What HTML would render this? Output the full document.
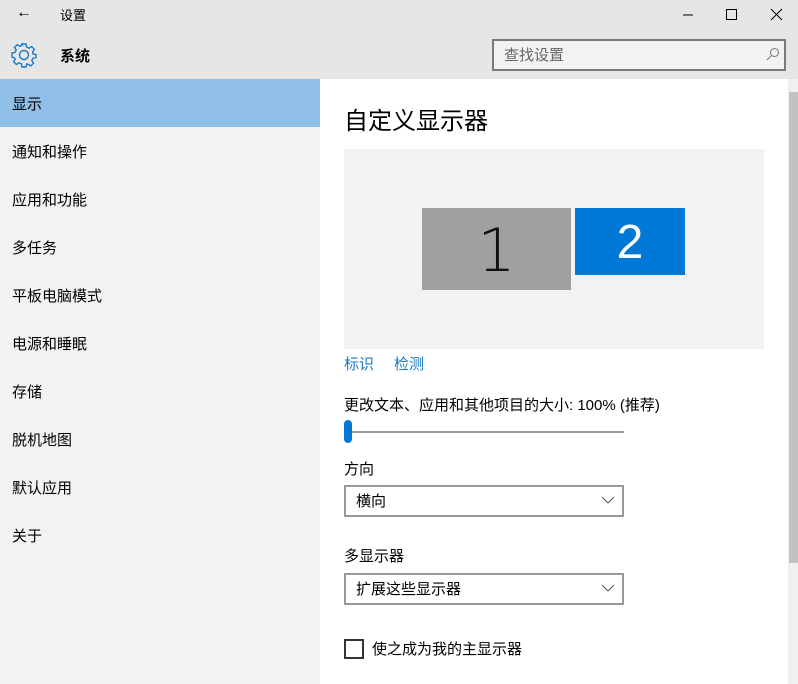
<!DOCTYPE html><html><head><meta charset="utf-8"><style>
*{margin:0;padding:0;box-sizing:border-box}
body{width:798px;height:684px;overflow:hidden;background:#f2f2f2;font-family:"Liberation Sans","Noto Sans CJK SC",sans-serif;position:relative;color:#000}
.a{position:absolute}
.top{left:0;top:0;width:798px;height:79px;background:#e6e6e6}
.item{left:12px;font-size:15px}
</style></head><body>
<div class="a top"></div>
<div class="a" style="left:16px;top:4px;font-size:16px">&#8592;</div>
<div class="a" style="left:60px;top:5px;font-size:13px">设置</div>
<svg class="a" style="left:682px;top:8px" width="14" height="14"><line x1="1" y1="7" x2="11" y2="7" stroke="#000"/></svg>
<svg class="a" style="left:725px;top:8px" width="14" height="14"><rect x="1.5" y="1.5" width="10" height="10" fill="none" stroke="#000"/></svg>
<svg class="a" style="left:770px;top:8px" width="14" height="14"><path d="M1 1L12 12M12 1L1 12" stroke="#000"/></svg>
<svg class="a" style="left:11px;top:42px" width="26" height="26" viewBox="0 0 26 26"><g fill="none" stroke="#1a79c9" stroke-width="1.4"><path d="M11 2h4l.6 3 2.4 1.2 2.6-1.7 2.8 2.8-1.7 2.6L22 12l3 .6v3l-3 .6-1.2 2.4 1.7 2.6-2.8 2.8-2.6-1.7L15.6 22 15 25h-4l-.6-3L8 20.8l-2.6 1.7-2.8-2.8 1.7-2.6L3 15.6 1 15v-4l3-.6L5.2 8 3.5 5.4 6.3 2.6 8.9 4.3 11.4 3z"/><circle cx="13" cy="13" r="4.5"/></g></svg>
<div class="a" style="left:60px;top:45px;font-size:15px;font-weight:bold">系统</div>
<div class="a" style="left:492px;top:39px;width:294px;height:32px;border:2px solid #7a7a7a;background:#f2f2f2"></div>
<div class="a" style="left:504px;top:44px;font-size:15px;color:#666">查找设置</div>
<svg class="a" style="left:766px;top:47px" width="14" height="14"><circle cx="8.5" cy="5.5" r="4" fill="none" stroke="#777"/><line x1="5.5" y1="8.5" x2="1" y2="13" stroke="#777"/></svg>
<div class="a" style="left:0;top:79px;width:320px;height:48px;background:#8fbfe7"></div>
<div class="a item" style="top:93px">显示</div>
<div class="a item" style="top:141px">通知和操作</div>
<div class="a item" style="top:189px">应用和功能</div>
<div class="a item" style="top:237px">多任务</div>
<div class="a item" style="top:285px">平板电脑模式</div>
<div class="a item" style="top:333px">电源和睡眠</div>
<div class="a item" style="top:381px">存储</div>
<div class="a item" style="top:429px">脱机地图</div>
<div class="a item" style="top:477px">默认应用</div>
<div class="a item" style="top:525px">关于</div>
<div class="a" style="left:320px;top:79px;width:478px;height:605px;background:#fff"></div>
<div class="a" style="left:788px;top:79px;width:10px;height:605px;background:#f0f0f0"></div>
<div class="a" style="left:789px;top:92px;width:9px;height:471px;background:#c2c2c2"></div>
<div class="a" style="left:344px;top:101px;font-size:24px">自定义显示器</div>
<div class="a" style="left:344px;top:149px;width:420px;height:200px;background:#f2f2f2"></div>
<div class="a" style="left:422px;top:208px;width:149px;height:82px;background:#a0a0a0;text-align:center;font-size:60px;line-height:86px;color:#111;font-family:'DejaVu Sans',sans-serif;font-weight:200">1</div>
<div class="a" style="left:575px;top:208px;width:110px;height:67px;background:#0078d7;text-align:center;font-size:48px;line-height:70px;color:#fff">2</div>
<div class="a" style="left:344px;top:353px;font-size:15px;color:#1a79c9">标识</div>
<div class="a" style="left:394px;top:353px;font-size:15px;color:#1a79c9">检测</div>
<div class="a" style="left:344px;top:394px;font-size:15px">更改文本、应用和其他项目的大小: 100% (推荐)</div>
<div class="a" style="left:344px;top:431px;width:280px;height:2px;background:#999"></div>
<div class="a" style="left:344px;top:420px;width:8px;height:23px;border-radius:4px;background:#0078d7"></div>
<div class="a" style="left:344px;top:458px;font-size:15px">方向</div>
<div class="a" style="left:344px;top:485px;width:280px;height:32px;border:2px solid #999"></div>
<div class="a" style="left:356px;top:490px;font-size:15px">横向</div>
<svg class="a" style="left:602px;top:496px" width="12" height="8"><path d="M0 1L6 7L12 1" fill="none" stroke="#555"/></svg>
<div class="a" style="left:344px;top:545px;font-size:15px">多显示器</div>
<div class="a" style="left:344px;top:573px;width:280px;height:32px;border:2px solid #999"></div>
<div class="a" style="left:356px;top:578px;font-size:15px">扩展这些显示器</div>
<svg class="a" style="left:602px;top:584px" width="12" height="8"><path d="M0 1L6 7L12 1" fill="none" stroke="#555"/></svg>
<div class="a" style="left:344px;top:639px;width:20px;height:20px;border:2px solid #333"></div>
<div class="a" style="left:372px;top:638px;font-size:15px">使之成为我的主显示器</div>
</body></html>
